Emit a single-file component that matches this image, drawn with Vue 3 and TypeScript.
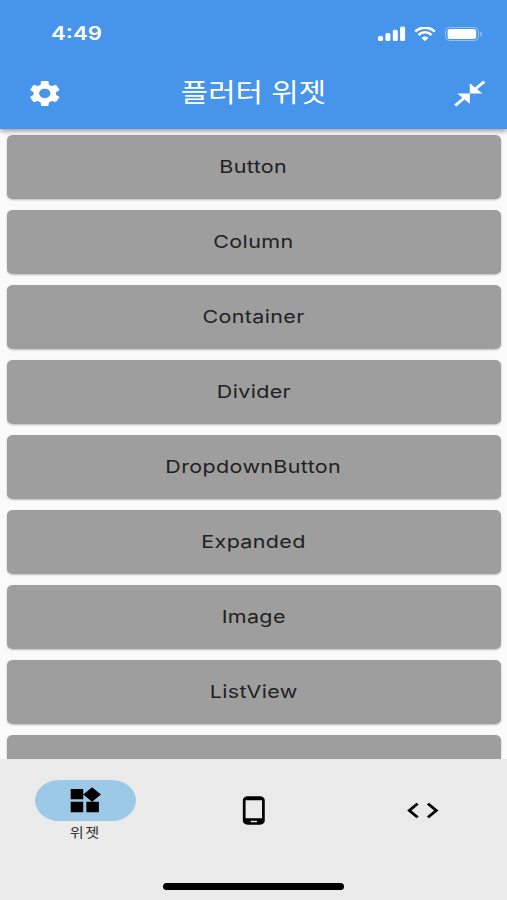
<script setup lang="ts">
import { ref } from 'vue'

const widgets: string[] = [
  'Button',
  'Column',
  'Container',
  'Divider',
  'DropdownButton',
  'Expanded',
  'Image',
  'ListView',
  '',
]

const tab = ref<number>(0)
</script>

<template>
  <div class="phone">
    <header class="appbar">
      <div class="status">
        <span class="time">4:49</span>
        <svg class="signal" viewBox="0 0 28 16" preserveAspectRatio="none">
          <rect x="0" y="10" width="5" height="5" rx="1.6" />
          <rect x="7.4" y="7" width="5" height="8" rx="1.6" />
          <rect x="14.8" y="3.8" width="5" height="11.2" rx="1.6" />
          <rect x="22.1" y="0.6" width="5" height="14.4" rx="1.6" />
        </svg>
        <svg class="wifi" viewBox="0 0 22 14" preserveAspectRatio="none">
          <path d="M1.2 4.6C6.6-.7 15.4-.7 20.8 4.6" />
          <path d="M4.5 8C8.2 4.4 13.8 4.4 17.5 8" />
          <path class="dot" d="M7.6 11.1C9.5 9.1 12.5 9.1 14.4 11.1L11 14.2Z" />
        </svg>
        <svg class="battery" viewBox="0 0 38 14">
          <rect class="shell" x="0.5" y="0.5" width="33" height="13" rx="4" />
          <rect x="2.6" y="2.1" width="28.6" height="9.8" rx="2.2" />
          <path class="cap" d="M35.4 4.7c2.2.7 2.2 3.9 0 4.6z" />
        </svg>
      </div>
      <div class="toolbar">
        <svg class="icon" viewBox="0 0 24 24" preserveAspectRatio="none">
          <path d="M19.14 12.94c.04-.3.06-.61.06-.94 0-.32-.02-.64-.07-.94l2.03-1.58c.18-.14.23-.41.12-.61l-1.92-3.32c-.12-.22-.37-.29-.59-.22l-2.39.96c-.5-.38-1.03-.7-1.62-.94l-.36-2.54c-.04-.24-.24-.41-.48-.41h-3.84c-.24 0-.43.17-.47.41l-.36 2.54c-.59.24-1.13.57-1.62.94l-2.39-.96c-.22-.08-.47 0-.59.22L2.74 8.87c-.12.21-.08.47.12.61l2.03 1.58c-.05.3-.09.63-.09.94s.02.64.07.94l-2.03 1.58c-.18.14-.23.41-.12.61l1.92 3.32c.12.22.37.29.59.22l2.39-.96c.5.38 1.03.7 1.62.94l.36 2.54c.05.24.24.41.48.41h3.84c.24 0 .44-.17.47-.41l.36-2.54c.59-.24 1.13-.56 1.62-.94l2.39.96c.22.08.47 0 .59-.22l1.92-3.32c.12-.22.07-.47-.12-.61l-2.01-1.58zM12 15.6c-1.98 0-3.6-1.62-3.6-3.6s1.62-3.6 3.6-3.6 3.6 1.62 3.6 3.6-1.62 3.6-3.6 3.6z" />
        </svg>
        <h1 class="title">플러터 위젯</h1>
        <svg class="icon" viewBox="0 0 24 24" preserveAspectRatio="none">
          <path d="M22 3.41 16.71 8.7 20 12h-8V4l3.29 3.29L20.59 2 22 3.41zM3.41 22l5.29-5.29L12 20v-8H4l3.29 3.29L2 20.59 3.41 22z" />
        </svg>
      </div>
    </header>

    <main class="list">
      <button v-for="(name, i) in widgets" :key="i" class="item" type="button">
        <span class="label">{{ name }}</span>
      </button>
    </main>

    <nav class="nav">
      <div class="tabs">
        <button class="tab" type="button" @click="tab = 0">
          <span class="pill" :class="{ active: tab === 0 }">
            <svg class="icon" viewBox="0 0 24 24" preserveAspectRatio="none">
              <path d="M13 13v8h8v-8h-8zM3 21h8v-8H3v8zM3 3v8h8V3H3zm13.66-1.31L11 7.34 16.66 13l5.66-5.66-5.66-5.65z" />
            </svg>
          </span>
          <span v-if="tab === 0" class="caption">위젯</span>
        </button>
        <button class="tab" type="button" @click="tab = 1">
          <span class="pill" :class="{ active: tab === 1 }">
            <svg class="icon" viewBox="0 0 24 24" preserveAspectRatio="none">
              <path fill-rule="evenodd" d="M16 1H8C6.34 1 5 2.34 5 4v16c0 1.66 1.34 3 3 3h8c1.66 0 3-1.34 3-3V4c0-1.66-1.34-3-3-3zm-2 20h-4v-1h4v1zm3.25-3H6.75V4h10.5v14z" />
            </svg>
          </span>
        </button>
        <button class="tab" type="button" @click="tab = 2">
          <span class="pill" :class="{ active: tab === 2 }">
            <svg class="icon" viewBox="0 0 24 24" preserveAspectRatio="none">
              <path d="M9.4 16.6 4.8 12l4.6-4.6L8 6l-6 6 6 6 1.4-1.4zm5.2 0 4.6-4.6-4.6-4.6L16 6l6 6-6 6-1.4-1.4z" />
            </svg>
          </span>
        </button>
      </div>
      <div class="home"></div>
    </nav>
  </div>
</template>

<style>
body {
  margin: 0;
  background: #fafafa;
}
</style>

<style scoped>
.phone {
  display: flex;
  flex-direction: column;
  width: 507px;
  height: 900px;
  overflow: hidden;
  background: #fafafa;
  font-family: Inter, "Noto Sans CJK KR", sans-serif;
}
.phone * {
  box-sizing: border-box;
}
button {
  border: 0;
  padding: 0;
  font: inherit;
}
svg {
  display: block;
  flex: none;
}
.appbar {
  position: relative;
  z-index: 1;
  flex: none;
  height: 129px;
  background: #4794eb;
  color: #fff;
  box-shadow: 0 2px 5px rgba(0, 0, 0, 0.4);
}
.status {
  display: flex;
  align-items: center;
  height: 57px;
  padding: 10px 24px 0 51px;
  fill: #fff;
}
.time {
  margin-right: auto;
  font-size: 19px;
  font-weight: 600;
  line-height: 24px;
  transform: scaleX(1.17);
  transform-origin: left;
}
.signal {
  width: 28px;
  height: 16px;
  margin-right: 8px;
}
.wifi {
  width: 22px;
  height: 14px;
  margin-right: 9px;
}
.wifi path {
  fill: none;
  stroke: #fff;
  stroke-width: 2.5;
}
.wifi .dot {
  fill: #fff;
  stroke: none;
}
.battery {
  width: 38px;
  height: 14px;
}
.battery .shell {
  fill: none;
  stroke: rgba(255, 255, 255, 0.4);
}
.battery .cap {
  fill: rgba(255, 255, 255, 0.45);
}
.toolbar {
  display: flex;
  align-items: center;
  justify-content: space-between;
  height: 72px;
  padding: 0 18px 0 26px;
}
.icon {
  width: 37.6px;
  height: 31px;
  fill: currentColor;
}
.title {
  margin: 0 8px 0 0;
  font-size: 26px;
  font-weight: 400;
  line-height: 36px;
  transform: scaleX(1.145);
}
.list {
  flex: 1;
  min-height: 0;
  display: flex;
  flex-direction: column;
  gap: 11px;
  padding: 5.5px 6px 0 7px;
  overflow: hidden;
}
.item {
  flex: none;
  display: flex;
  align-items: center;
  justify-content: center;
  height: 64px;
  border-radius: 6px / 5px;
  background: #9e9e9e;
  color: #212121;
  box-shadow: 0 1px 2px rgba(0, 0, 0, 0.25);
}
.label {
  margin-right: 1px;
  font-size: 17.9px;
  line-height: 24px;
  letter-spacing: 0.3px;
  transform: scaleX(1.2);
}
.nav {
  flex: none;
  display: flex;
  flex-direction: column;
  align-items: center;
  justify-content: space-between;
  height: 141px;
  padding-bottom: 10px;
  background: #eaeaea;
}
.tabs {
  display: grid;
  grid-template-columns: repeat(3, 1fr);
  width: 100%;
  height: 103px;
}
.tab {
  display: flex;
  flex-direction: column;
  align-items: center;
  justify-content: center;
  background: none;
  color: #000;
}
.pill {
  display: flex;
  align-items: center;
  justify-content: center;
  width: 101px;
  height: 41.5px;
  margin-left: 1px;
  border-radius: 25px / 21px;
}
.active {
  background: #9bc9e7;
}
.caption {
  height: 20px;
  margin-left: 2px;
  color: #333;
  font-size: 13px;
  line-height: 23px;
  letter-spacing: 1.4px;
  transform: scaleX(1.17);
}
.home {
  width: 181px;
  height: 7px;
  border-radius: 4px;
  background: #000;
}
</style>
